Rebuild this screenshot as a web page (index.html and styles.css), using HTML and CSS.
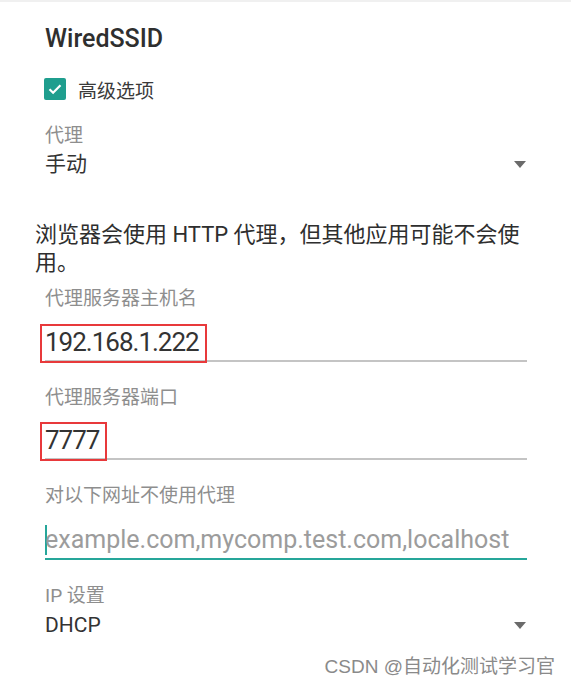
FILE: index.html
```html
<!DOCTYPE html>
<html lang="zh-CN">
<head>
  <meta charset="UTF-8">
  <meta name="viewport" content="width=device-width, initial-scale=1.0">
  <title>WiredSSID</title>
  <link rel="stylesheet" href="styles.css">
</head>
<body>

  <div class="dialog">
    <h1 class="title">WiredSSID</h1>

    <!-- Advanced options -->
    <label class="check-row">
      <span class="checkbox">
        <svg width="16" height="16" viewBox="0 0 16 16"><path d="M2.5 8.2l3.6 3.6 7.4-7.6" fill="none" stroke="#fff" stroke-width="2.2"/></svg>
      </span>
      <span class="check-text">高级选项</span>
    </label>

    <!-- Proxy mode -->
    <div class="field-label first">代理</div>
    <div class="spinner">
      <span class="spinner-value">手动</span>
      <span class="arrow"></span>
    </div>

    <p class="note">浏览器会使用 HTTP 代理，但其他应用可能不会使用。</p>

    <div class="field-label">代理服务器主机名</div>
    <div class="edit host">
      <span class="value marked">192.168.1.222</span>
    </div>

    <div class="field-label">代理服务器端口</div>
    <div class="edit port">
      <span class="value marked">7777</span>
    </div>

    <div class="field-label">对以下网址不使用代理</div>
    <div class="edit focused">
      <span class="cursor"></span><span class="placeholder">example.com,mycomp.test.com,localhost</span>
    </div>

    <!-- IP settings -->
    <div class="field-label">IP 设置</div>
    <div class="spinner ip">
      <span class="spinner-value">DHCP</span>
      <span class="arrow"></span>
    </div>
  </div>

  <div class="watermark">CSDN @自动化测试学习官</div>

</body>
</html>
```

FILE: styles.css
```css
body {
  margin: 0;
  background-color: #fff;
  font-family: Roboto, "Noto Sans CJK SC", sans-serif;
  color: #333;
}
.dialog {
  border-top: 2px solid #f0f0f0;
  padding: 0 44px 0 45px;
}
.title {
  margin: 22px 0 0;
  font-size: 25px;
  font-weight: 500;
  line-height: 30px;
  color: #2f2f2f;
}
.check-row {
  display: flex;
  align-items: center;
  margin-top: 23px;
  height: 24px;
}
.checkbox {
  display: flex;
  align-items: center;
  justify-content: center;
  width: 22px;
  height: 22px;
  margin-left: -1px;
  border-radius: 2px;
  background-color: #1f9e8e;
}
.check-text {
  margin-left: 12px;
  font-size: 19px;
  color: #3a3a3a;
}
.field-label {
  margin-top: 10px;
  font-size: 19px;
  line-height: 24px;
  color: #8e8e8e;
}
.field-label.first {
  margin-top: 23px;
}
.spinner {
  display: flex;
  justify-content: space-between;
  align-items: center;
  margin-top: 2px;
  font-size: 21px;
  line-height: 28px;
  color: #333;
}
.spinner.ip {
  margin-top: 3px;
}
.arrow {
  width: 0;
  height: 0;
  margin-right: 1px;
  border-left: 6px solid transparent;
  border-right: 6px solid transparent;
  border-top: 7px solid #6a6a6a;
}
.note {
  margin: 43px 0 0 -10px;
  width: 490px;
  font-size: 22px;
  line-height: 28px;
  color: #2e2e2e;
}
.note + .field-label {
  margin-top: 10px;
}
.edit {
  padding-top: 13px;
  line-height: 36px;
  border-bottom: 2px solid #c4c4c4;
  font-size: 26px;
}
.edit + .field-label {
  margin-top: 24px;
}
.edit.port {
  padding-top: 12px;
}
.edit.focused {
  display: flex;
  align-items: center;
  padding-top: 14px;
  border-bottom-color: #26a69a;
}
.value {
  letter-spacing: -1px;
  color: #333;
}
.marked {
  position: relative;
  display: inline-block;
}
.marked::after {
  content: "";
  position: absolute;
  top: 0;
  left: -5px;
  right: -8px;
  bottom: -3px;
  border: 2px solid #e8393b;
}
.cursor {
  width: 2px;
  height: 30px;
  margin-right: -2px;
  background-color: #26a69a;
}
.placeholder {
  font-size: 25px;
  color: #9c9c9c;
}
.watermark {
  margin-top: 16px;
  padding-right: 16px;
  text-align: right;
  font-family: "Liberation Sans", "Noto Sans CJK SC", sans-serif;
  font-size: 19px;
  line-height: 24px;
  color: #8a8a8a;
}
```
